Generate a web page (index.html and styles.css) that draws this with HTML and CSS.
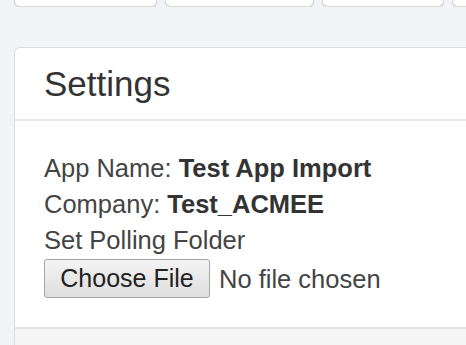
FILE: index.html
```html
<!DOCTYPE html>
<html>
<head>
    <meta charset="UTF-8">
    <title>Settings</title>
    <link rel="stylesheet" href="styles.css">
</head>
<body>
    <div class="tabs">
        <div class="tab tab-1"></div>
        <div class="tab tab-2"></div>
        <div class="tab tab-3"></div>
        <div class="tab tab-4"></div>
    </div>

    <div class="panel">
        <div class="panel-heading">
            <h3>Settings</h3>
        </div>
        <div class="panel-body">
            <div class="row">App Name: <b>Test App Import</b></div>
            <div class="row">Company: <b>Test_ACMEE</b></div>
            <div class="row">Set Polling Folder</div>
            <div class="file-input">
                <button class="file-btn">Choose File</button>
                <span class="file-name">No file chosen</span>
            </div>
        </div>
        <div class="panel-footer"></div>
    </div>
</body>
</html>
```

FILE: styles.css
```css
body {
    margin: 0;
    background: #f3f4f8;
    font-family: 'Liberation Sans', Arial, sans-serif;
    color: #333;
    overflow: hidden;
}
.tabs {
    display: flex;
    gap: 8px;
    padding-left: 14px;
    overflow: hidden;
}
.tab {
    height: 6px;
    background: #fff;
    border: 1px solid #d9d9d9;
    border-top: none;
    border-radius: 0 0 6px 6px;
    box-shadow: 0 1px 2px rgba(0, 0, 0, 0.12);
    flex-shrink: 0;
}
.tab-1 { width: 141px; }
.tab-2 { width: 147px; }
.tab-3 { width: 120px; }
.tab-4 { width: 40px; }
.panel {
    margin: 40px 0 0 14px;
    background: #fff;
    border: 1px solid #dcdde0;
    border-right: none;
    border-bottom: none;
    border-radius: 6px 0 0 0;
}
.panel-heading {
    height: 71px;
    padding: 0 29px;
    border-bottom: 2px solid #e6e8ec;
    display: flex;
    align-items: center;
}
.panel-heading h3 {
    margin: 0;
    font-size: 35px;
    font-weight: normal;
    color: #333;
}
.panel-body {
    padding: 29px 29px 29px;
    font-size: 25.5px;
    line-height: 36px;
    color: #444;
}
.panel-body b {
    color: #333;
}
.file-input {
    display: flex;
    align-items: center;
    gap: 9px;
    margin-top: 1px;
}
.file-btn {
    font-family: inherit;
    font-size: 25px;
    color: #222;
    height: 39px;
    width: 166px;
    padding: 0;
    background: linear-gradient(#f4f4f4, #dedede);
    border: 1px solid #a5a5a5;
    border-radius: 3px;
}
.file-name {
    color: #444;
}
.panel-footer {
    height: 16px;
    background: #f5f5f5;
    border-top: 2px solid #e3e3e3;
}
```
